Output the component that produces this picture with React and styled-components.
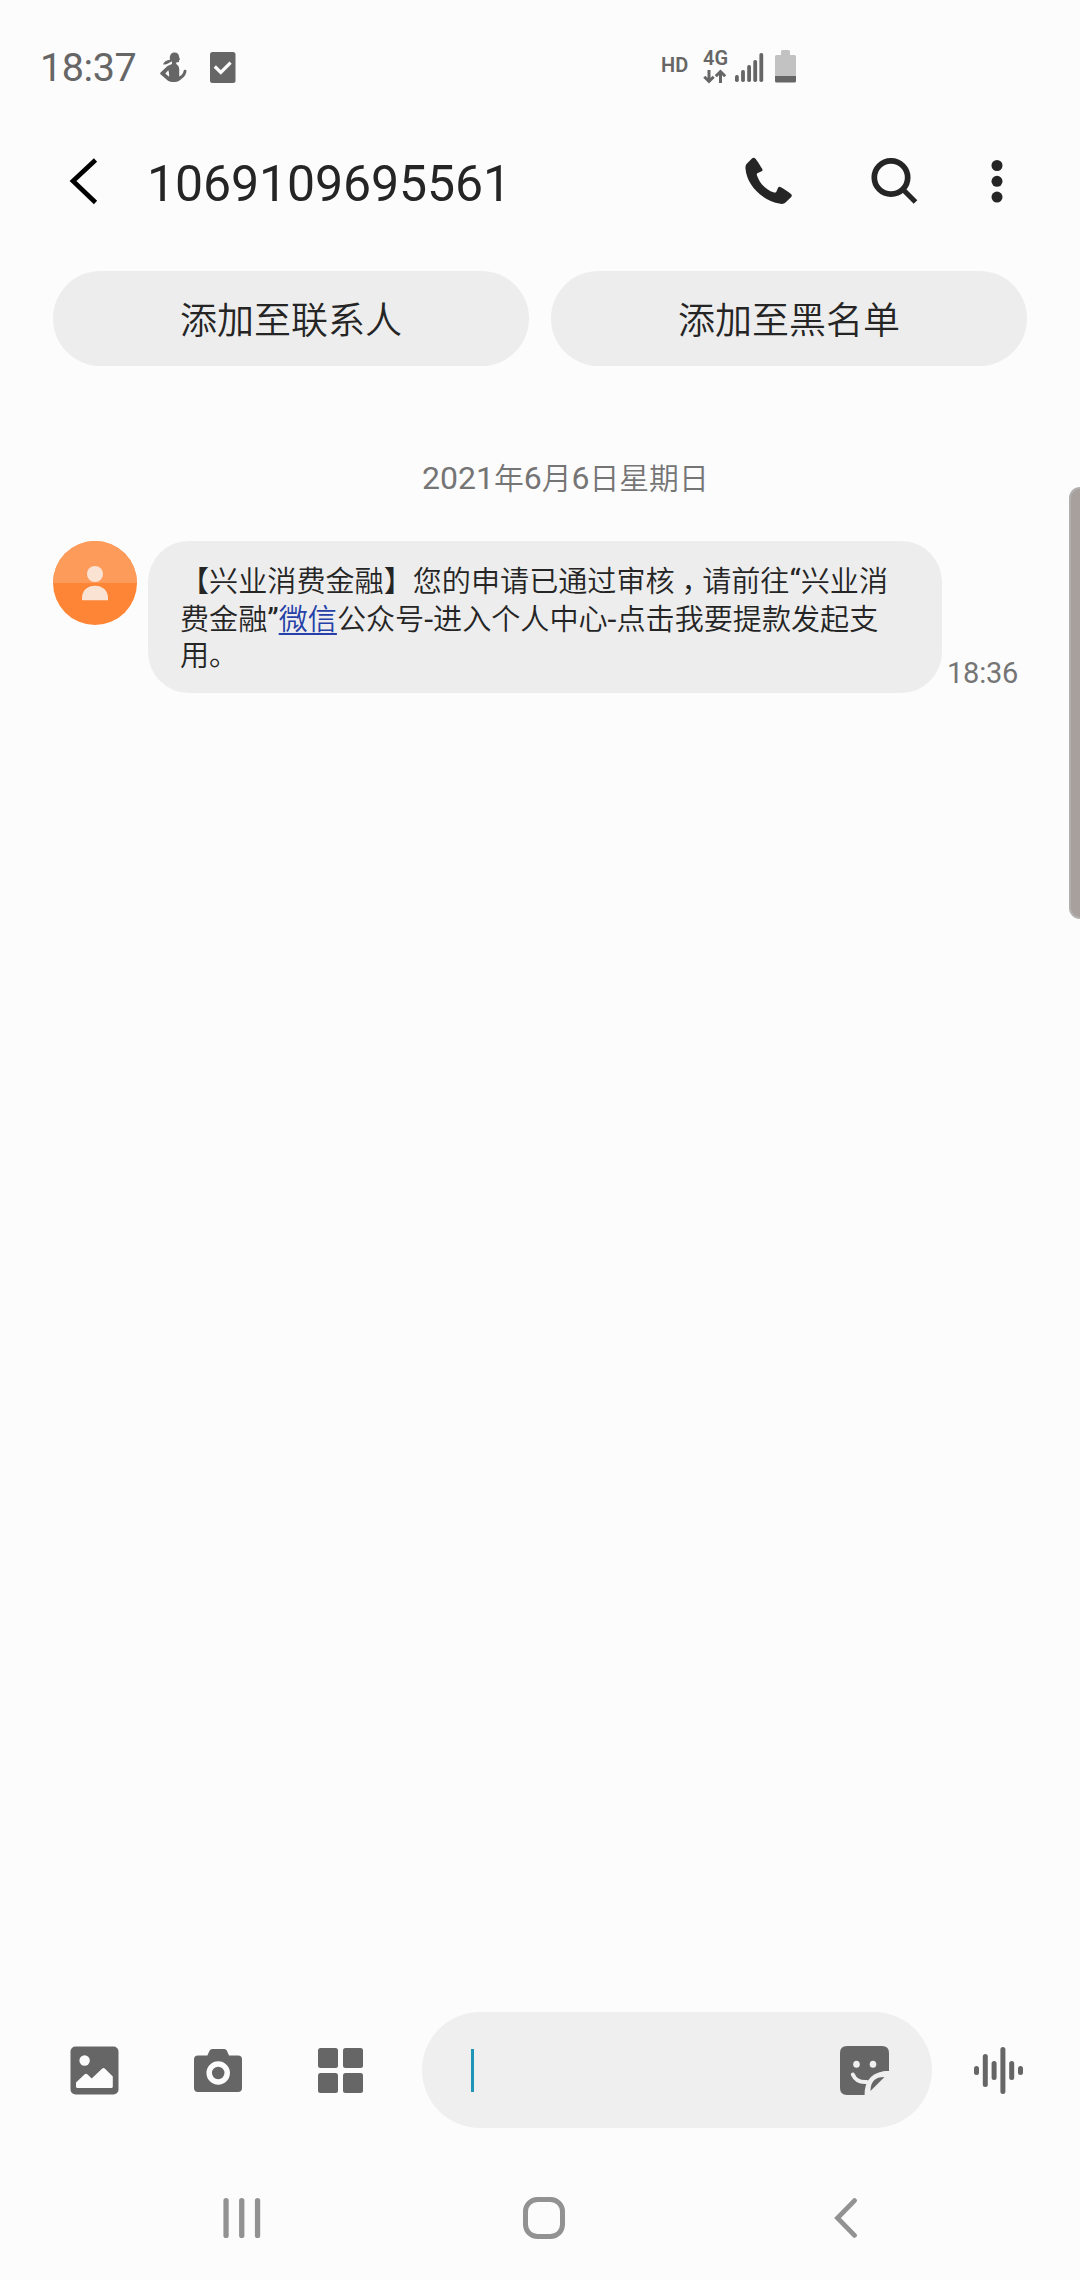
import React from "react";
import styled, { createGlobalStyle } from "styled-components";

const GlobalStyle = createGlobalStyle`
  * { box-sizing: border-box; }
  html, body { margin: 0; padding: 0; background: #fcfcfc; }
  button { border: 0; background: none; padding: 0; margin: 0; font: inherit; color: inherit; }
  svg { display: block; flex: none; }
`;

const Screen = styled.div`
  position: relative;
  display: flex;
  flex-direction: column;
  width: 1080px;
  height: 2280px;
  overflow: hidden;
  background: #fcfcfc;
  color: #252525;
  font-family: Roboto, "Noto Sans CJK SC", sans-serif;
`;

const StatusBar = styled.header`
  display: flex;
  align-items: center;
  height: 134px;
  padding-left: 40px;
  color: #666;
`;

const Clock = styled.time`
  width: 120px;
  padding-top: 2px;
  font-size: 39.5px;
  line-height: 48px;
  letter-spacing: -0.4px;
`;

const StatusIcons = styled.div`
  display: flex;
  gap: 23px;
  width: 501px;
`;

const SignalGroup = styled.div`
  display: flex;
  align-items: flex-start;
`;

const HdLabel = styled.span`
  width: 42px;
  padding-top: 3px;
  font-size: 20px;
  line-height: 24px;
  font-weight: 600;
`;

const Network = styled.div`
  display: flex;
  flex-direction: column;
  width: 32px;
  font-size: 20px;
  font-weight: 600;
  line-height: 17px;
  gap: 2px;
`;

const Battery = styled.div`
  margin-left: 11px;
`;

const TitleBar = styled.div`
  display: flex;
  align-items: center;
  height: 94px;
  padding: 0 70px 0 68px;
`;

const Title = styled.h1`
  flex: 1;
  margin: 0 0 0 49px;
  font-size: 50px;
  font-weight: 400;
  line-height: 60px;
  padding-top: 6px;
  letter-spacing: -0.1px;
`;

const TitleActions = styled.div`
  display: flex;
  align-items: center;
  width: 265px;
  gap: 78px;

  button:last-child {
    margin-left: -6px;
  }
`;

const QuickActions = styled.div`
  display: flex;
  gap: 22px;
  margin-top: 43px;
  padding: 0 53px;
`;

const PillButton = styled.button`
  flex: 1;
  height: 95px;
  padding-top: 7px;
  border-radius: 48px;
  background: #ededed;
  color: #252525;
  font-size: 37px;
  font-weight: 350;
  line-height: 54px;
`;

const Conversation = styled.main`
  flex: 1;
  padding: 88px 0 0 53px;
`;

const DateLabel = styled.div`
  width: 1027px;
  padding-left: 369px;
  height: 48px;
  color: #757575;
  font-size: 29.8px;
  font-weight: 350;
  line-height: 48px;
`;

const Latin = styled.span`
  font-size: 32px;
  font-weight: 400;
`;

const MessageRow = styled.div`
  display: flex;
  align-items: flex-start;
  margin-top: 39px;
`;

const Bubble = styled.div`
  width: 794px;
  height: 152px;
  margin-left: 11px;
  padding: 22px 32px 0;
  border-radius: 41px;
  background: #ededed;
  font-size: 29.1px;
  font-weight: 350;
  line-height: 37.5px;
  white-space: nowrap;
`;

const Line = styled.div`
  height: 37.5px;
`;

const Comma = styled.span`
  padding: 0 6px 0 7px;
  font-feature-settings: "halt";
`;

const Link = styled.a`
  color: #2540a8;
  text-decoration: underline;
  text-decoration-thickness: 2px;
  text-underline-offset: 3px;
`;

const SentAt = styled.time`
  align-self: flex-end;
  margin-left: 5px;
  padding-bottom: 1px;
  color: #757575;
  font-size: 29px;
  letter-spacing: -0.2px;
  line-height: 38px;
`;

const EdgeHandle = styled.div`
  position: absolute;
  top: 487px;
  right: 0;
  width: 11px;
  height: 432px;
  border: 2px solid #b2b0af;
  border-right: 0;
  border-radius: 14px 0 0 14px;
  background: #a8a09c;
`;

const Composer = styled.footer`
  display: flex;
  align-items: center;
  height: 116px;
  padding-left: 70px;
`;

const Attachments = styled.div`
  display: flex;
  align-items: center;
  gap: 75.5px;
  width: 352px;

  button:nth-child(2) {
    margin: 0 1px 0 -1px;
  }
`;

const InputPill = styled.div`
  display: flex;
  align-items: center;
  justify-content: space-between;
  width: 510px;
  height: 116px;
  margin-right: 42px;
  padding: 0 43px 0 49px;
  border-radius: 58px;
  background: #efefef;
`;

const Caret = styled.span`
  width: 3px;
  height: 43px;
  background: #1f95b8;
`;

const NavBar = styled.nav`
  display: flex;
  align-items: center;
  height: 124px;
  margin-top: 28px;
  padding-left: 223px;

  svg:nth-child(2) {
    margin: 0 268px 0 262px;
  }
`;

const RunnerIcon = () => (
  <svg width="27" height="31" viewBox="0 0 27 31" fill="#666">
    <path d="M14.5 .5C17.500 .5 19 2.300 19 4.500L20 7.500 19 8.300 19 10 16.200 10.500 16.200 12C18.500 13.500 19.500 15.500 19.200 19V24.500C21.800 23.500 23.200 21.500 23.500 19.300 23.800 17.500 25.800 17.500 26.500 18.500 26.300 23.500 23 26 19.500 28.500 16.500 30.700 10.500 30.500 8 28.800L.5 22.200Q-.2 21.400 .6 20.500L7.500 14 12 12 11.800 9.200 8 11.500C6.500 12.400 4.500 12.600 3 12.200 4 9.500 7 8.200 10 7.800 9.200 3.500 11 .5 14.500 .5ZM8.300 18.200 5.300 21.600 9 24.800Q9.500 21 8.300 18.200Z" fillRule="evenodd" />
  </svg>
);

const CheckIcon = () => (
  <svg width="26" height="31" viewBox="0 0 26 31">
    <rect width="25.500" height="31" rx="2.500" fill="#666" />
    <path d="M4.800 14.500l6 6L20.600 10.600" fill="none" stroke="#fcfcfc" strokeWidth="3.200" />
  </svg>
);

const ArrowsIcon = () => (
  <svg width="24" height="15" viewBox="0 0 24 15" fill="none" stroke="#666" strokeWidth="3">
    <path d="M6 1V13M1.300 7.800L6 12.500 10.700 7.800M17.500 14V2.500M12.800 7.200L17.500 2.500 22.200 7.200" />
  </svg>
);

const SignalIcon = () => (
  <svg width="29" height="34" viewBox="0 0 29 34" fill="#666">
    {[7, 12, 17, 22, 29].map((h, i) => (
      <rect key={h} x={i * 6.1} y={32 - h} width="3.800" height={h} rx="1.700" />
    ))}
  </svg>
);

const BatteryIcon = () => (
  <svg width="21" height="33" viewBox="0 0 21 33">
    <path d="M6 5V1.500Q6 0 7.500 0H13.500Q15 0 15 1.500V5H19.500Q21 5 21 6.500V26H0V6.500Q0 5 1.500 5Z" fill="#c2c2c2" />
    <path d="M0 26H21V31Q21 32.500 19.500 32.500H1.500Q0 32.500 0 31Z" fill="#666" />
  </svg>
);

const BackIcon = () => (
  <svg width="30" height="48" viewBox="0 0 30 48" fill="none" stroke="#000" strokeWidth="4.700">
    <path d="M27.500 3L5 24 27.500 45.500" />
  </svg>
);

const PhoneIcon = () => (
  <svg width="48" height="48" viewBox="0 0 48 48" fill="#252525">
    <path d="M7.200 1.300Q9 0 10.500 1.700C13.200 5 15 8.500 17.300 12.100Q18 13.600 16.700 14.300L12.300 16.300Q11.500 17 12 18.500C14.600 26.500 21 33 29 35.400Q30.500 35.800 31.200 35L33.200 30.600Q34 29.200 35.400 29.900C39 31.800 42.600 34.200 46 37Q47.500 38.300 46.200 40L40.500 45.600Q38.800 47.300 35.500 46.800C16 43.500 1.500 27 .5 11.500Q.2 8.500 1.500 7.100Z" />
  </svg>
);

const SearchIcon = () => (
  <svg width="48" height="48" viewBox="0 0 48 48" fill="none" stroke="#252525" strokeWidth="5.700">
    <circle cx="20" cy="20.500" r="16.700" />
    <path d="M32 32.500L44.500 45" strokeWidth="5.200" />
  </svg>
);

const MoreIcon = () => (
  <svg width="12" height="44" viewBox="0 0 12 44" fill="#252525">
    <circle cx="6" cy="6.500" r="5.500" />
    <circle cx="6" cy="22.300" r="5.500" />
    <circle cx="6" cy="38.100" r="5.500" />
  </svg>
);

const AvatarIcon = () => (
  <svg width="84" height="84" viewBox="0 0 84 84">
    <circle cx="42" cy="42" r="42" fill="#fd8535" />
    <path d="M0 42A42 42 0 0 1 84 42Z" fill="#fd9b5b" />
    <g fill="#fbe3d4">
      <circle cx="42" cy="33" r="8" />
      <path d="M29 59.300V57C29 49.500 34.500 44.800 42 44.800S55 49.500 55 57V59.300Z" />
    </g>
  </svg>
);

const ImageIcon = () => (
  <svg width="49" height="49" viewBox="0 0 49 49">
    <rect x=".5" y=".5" width="48" height="48" rx="5" fill="#666" />
    <circle cx="14.600" cy="14.500" r="5.200" fill="#fcfcfc" />
    <path d="M6 36.500L14.700 28.200Q16 27.200 17.300 28.200L21.700 32.500 32 22.700Q33.500 21.300 35 22.700L42.800 30.500V40.500Q42.800 42 41.300 42H7.500Q6 42 6 40.500Z" fill="#fcfcfc" />
  </svg>
);

const CameraIcon = () => (
  <svg width="48" height="44" viewBox="0 0 48 44">
    <path d="M4 7.500H13.300L15.700 2.500Q16.500 1 18.200 1H30.300Q32 1 32.800 2.500L35 7.500H44Q48 7.500 48 11.500V40Q48 44 44 44H4Q0 44 0 40V11.500Q0 7.500 4 7.500Z" fill="#666" />
    <circle cx="24.200" cy="25" r="9" fill="none" stroke="#fcfcfc" strokeWidth="5.500" />
  </svg>
);

const GridIcon = () => (
  <svg width="45" height="45" viewBox="0 0 45 45" fill="#666">
    <rect width="20" height="20" rx="2.500" />
    <rect x="25" width="20" height="20" rx="2.500" />
    <rect y="25" width="20" height="20" rx="2.500" />
    <rect x="25" y="25" width="20" height="20" rx="2.500" />
  </svg>
);

const StickerIcon = () => (
  <svg width="49" height="49" viewBox="0 0 49 49">
    <path d="M7 0H42Q49 0 49 7V25C36 25 27 32 25 49H7Q0 49 0 42V7Q0 0 7 0Z" fill="#666" />
    <ellipse cx="16.500" cy="18.300" rx="3.300" ry="3.500" fill="#efefef" />
    <ellipse cx="33" cy="18.300" rx="3.300" ry="3.500" fill="#efefef" />
    <path d="M12.800 28.500C15 33.500 19.500 36.500 26.500 36" fill="none" stroke="#efefef" strokeWidth="4" strokeLinecap="round" />
    <path d="M26.800 49C26.800 35 33 27.500 49 27.200" fill="none" stroke="#efefef" strokeWidth="4.500" />
    <path d="M44.500 31L30.500 45C30.500 35.500 35 31 44.500 31Z" fill="#666" />
  </svg>
);

const VoiceIcon = () => (
  <svg width="50" height="48" viewBox="0 0 50 48" fill="#666">
    {[9, 33, 19, 47, 19, 9].map((h, i) => (
      <rect key={i} x={i * 8.8} y={24.5 - h / 2} width="5" height={h} rx="2.500" />
    ))}
  </svg>
);

const RecentsIcon = () => (
  <svg width="38" height="40" viewBox="0 0 38 40" fill="#929292">
    {[0, 15.700, 31.500].map((x) => (
      <rect key={x} x={x + 0.4} width="5.300" height="40" rx="2.600" />
    ))}
  </svg>
);

const HomeIcon = () => (
  <svg width="42" height="42" viewBox="0 0 42 42" fill="none" stroke="#929292" strokeWidth="5">
    <rect x="2.500" y="2.500" width="37" height="37" rx="12" />
  </svg>
);

const NavBackIcon = () => (
  <svg width="25" height="40" viewBox="0 0 25 40" fill="none" stroke="#929292" strokeWidth="4.800" strokeLinecap="round">
    <path d="M21.500 2.600L4.500 20 21.500 37.400" />
  </svg>
);

export default function App() {
  return (
    <>
      <GlobalStyle />
      <Screen>
        <StatusBar>
          <Clock>18:37</Clock>
          <StatusIcons>
            <RunnerIcon />
            <CheckIcon />
          </StatusIcons>
          <SignalGroup>
            <HdLabel>HD</HdLabel>
            <Network>
              4G
              <ArrowsIcon />
            </Network>
            <SignalIcon />
            <Battery>
              <BatteryIcon />
            </Battery>
          </SignalGroup>
        </StatusBar>

        <TitleBar>
          <button aria-label="返回"><BackIcon /></button>
          <Title>1069109695561</Title>
          <TitleActions>
            <button aria-label="拨号"><PhoneIcon /></button>
            <button aria-label="搜索"><SearchIcon /></button>
            <button aria-label="更多"><MoreIcon /></button>
          </TitleActions>
        </TitleBar>

        <QuickActions>
          <PillButton>添加至联系人</PillButton>
          <PillButton>添加至黑名单</PillButton>
        </QuickActions>

        <Conversation>
          <DateLabel>
            <Latin>2021</Latin>年<Latin>6</Latin>月<Latin>6</Latin>日星期日
          </DateLabel>
          <MessageRow>
            <AvatarIcon />
            <Bubble>
              <Line>
                【兴业消费金融】您的申请已通过审核<Comma>，</Comma>请前往<Latin>“</Latin>兴业消
              </Line>
              <Line>
                费金融<Latin>”</Latin><Link>微信</Link>公众号<Latin>-</Latin>进入个人中心<Latin>-</Latin>点击我要提款发起支
              </Line>
              <Line>用。</Line>
            </Bubble>
            <SentAt>18:36</SentAt>
          </MessageRow>
        </Conversation>

        <Composer>
          <Attachments>
            <button aria-label="图片"><ImageIcon /></button>
            <button aria-label="相机"><CameraIcon /></button>
            <button aria-label="应用"><GridIcon /></button>
          </Attachments>
          <InputPill>
            <Caret />
            <button aria-label="表情"><StickerIcon /></button>
          </InputPill>
          <button aria-label="语音"><VoiceIcon /></button>
        </Composer>

        <NavBar>
          <RecentsIcon />
          <HomeIcon />
          <NavBackIcon />
        </NavBar>

        <EdgeHandle />
      </Screen>
    </>
  );
}
